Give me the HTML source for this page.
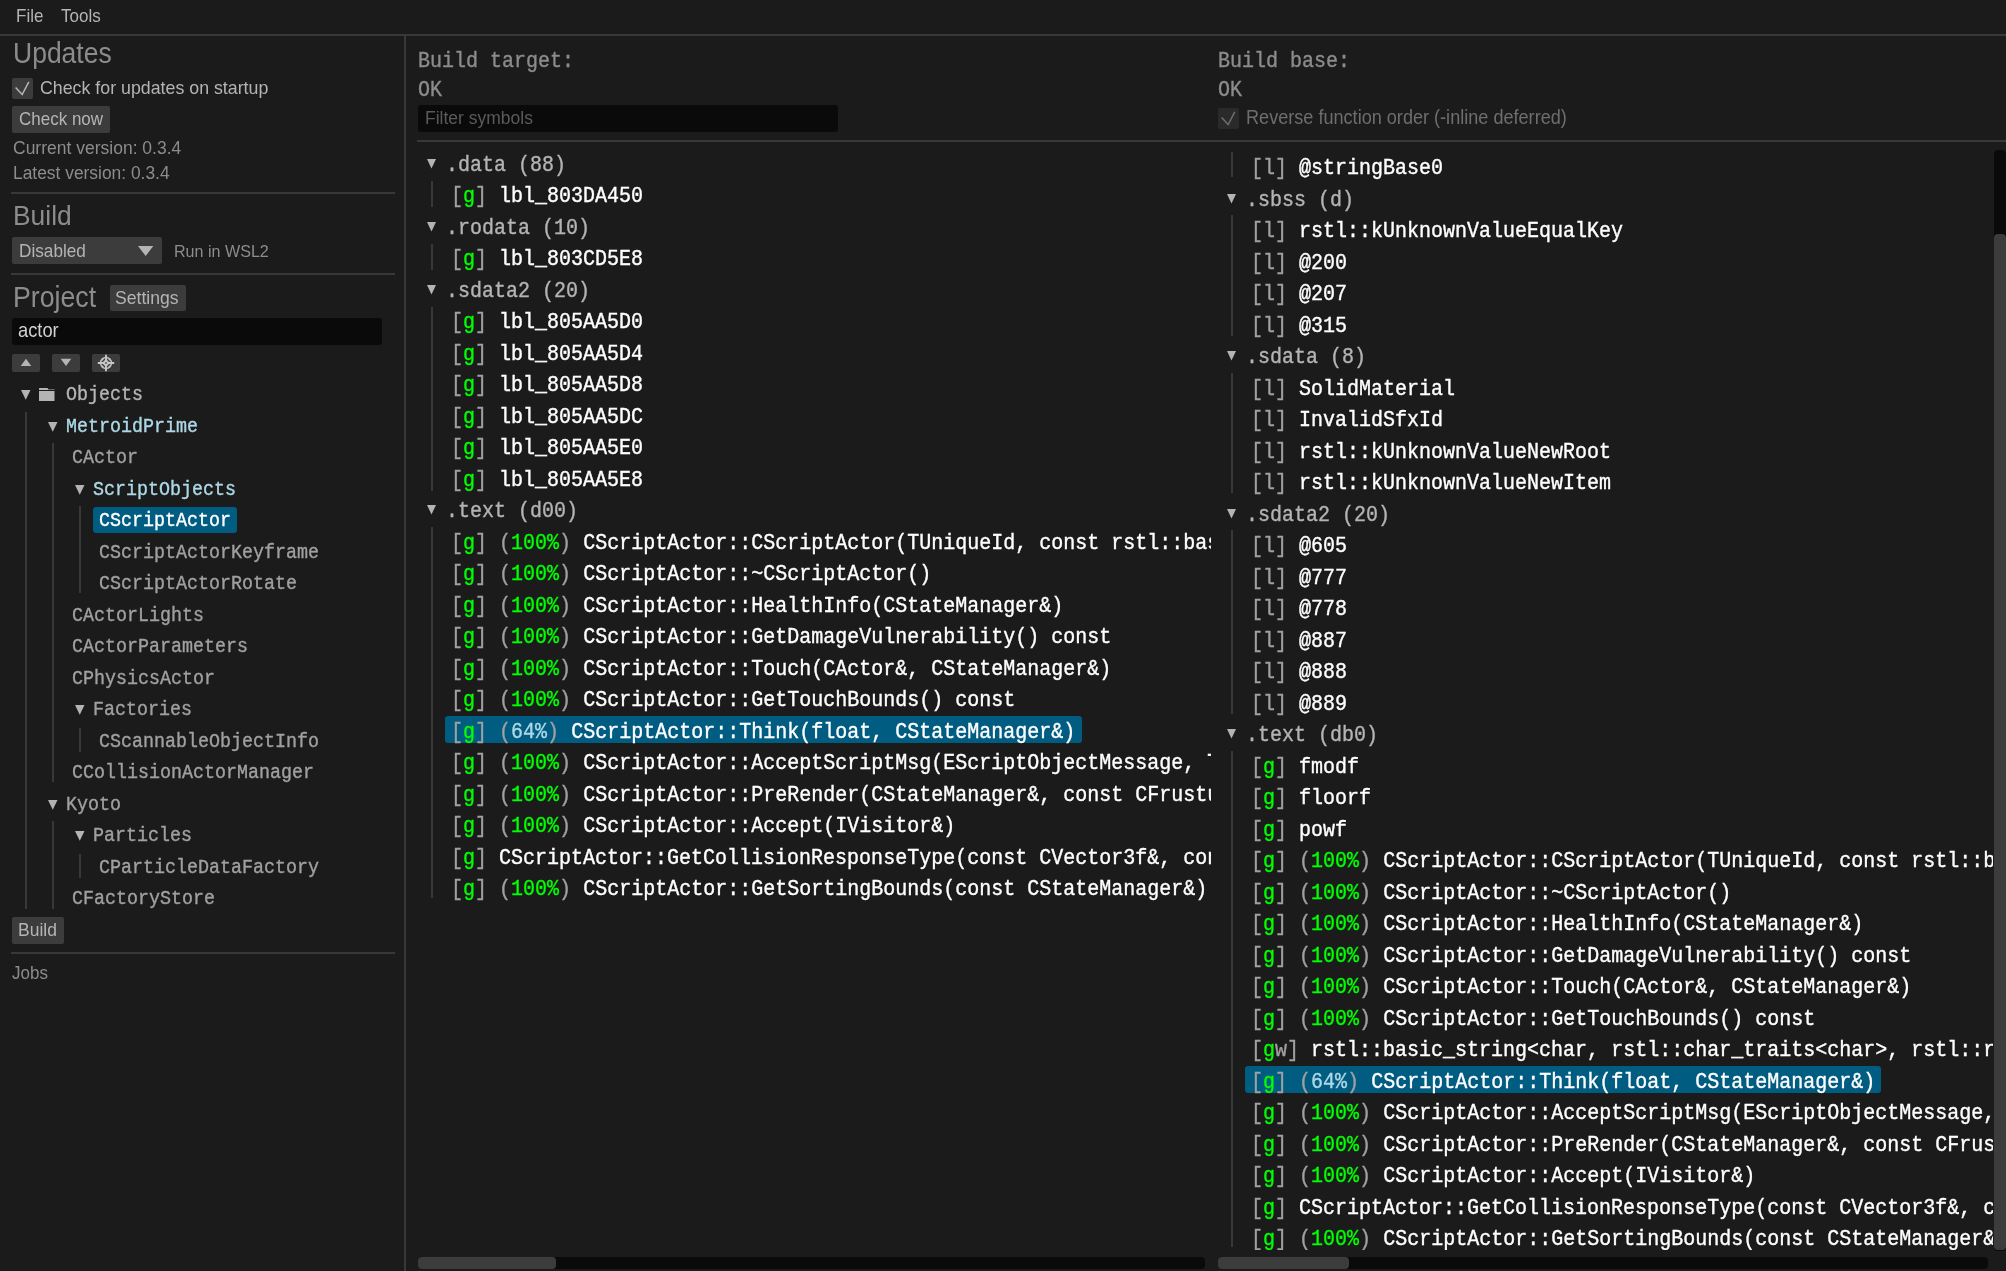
<!DOCTYPE html>
<html><head><meta charset="utf-8"><style>
html,body{margin:0;padding:0;background:#1b1b1b;width:2006px;height:1271px;overflow:hidden;position:relative}
.t{position:absolute;white-space:pre;margin:0;padding:0;will-change:transform}
.s{font-family:"Liberation Sans",sans-serif}
.m{font-family:"Liberation Mono",monospace;-webkit-text-stroke:0.35px currentColor}
.r{position:absolute;display:block}
.clip{position:absolute;overflow:hidden}
</style></head><body>
<div class="t s " style="left:15.5px;top:5.71px;font-size:17px;line-height:21px;color:#b4b4b4;transform:scaleY(1.08);transform-origin:0 16.39px;">File</div>
<div class="t s " style="left:61px;top:5.71px;font-size:17px;line-height:21px;color:#b4b4b4;transform:scaleY(1.08);transform-origin:0 16.39px;">Tools</div>
<div class="r" style="left:0px;top:34px;width:2006px;height:2px;background:#383838;border-radius:0px;"></div>
<div class="r" style="left:404px;top:36px;width:2px;height:1235px;background:#383838;border-radius:0px;"></div>
<div class="t s " style="left:12.5px;top:38.31px;font-size:26.5px;line-height:33px;color:#8c8c8c;transform:scaleY(1.08);transform-origin:0 25.69px;">Updates</div>
<div class="r" style="left:12px;top:77.5px;width:21px;height:21.0px;background:#3c3c3c;border-radius:2px;"></div>
<svg class="r" style="left:12px;top:77.5px" width="21" height="21"><polyline points="3.6,9.5 10.2,16.5 16.8,3.8" fill="none" stroke="#b4b4b4" stroke-width="1.5"/></svg>
<div class="t s " style="left:39.6px;top:76.83px;font-size:17.8px;line-height:22px;color:#b4b4b4;transform:scaleY(1.08);transform-origin:0 17.17px;">Check for updates on startup</div>
<div class="r" style="left:12px;top:106px;width:98px;height:26.599999999999994px;background:#3c3c3c;border-radius:2px;"></div>
<div class="t s " style="left:18.7px;top:108.91px;font-size:17.0px;line-height:21px;color:#b4b4b4;transform:scaleY(1.08);transform-origin:0 16.39px;">Check now</div>
<div class="t s " style="left:12.5px;top:136.93px;font-size:17.5px;line-height:22px;color:#8c8c8c;transform:scaleY(1.08);transform-origin:0 17.07px;">Current version: 0.3.4</div>
<div class="t s " style="left:12.5px;top:162.47px;font-size:17.4px;line-height:22px;color:#8c8c8c;transform:scaleY(1.08);transform-origin:0 17.03px;">Latest version: 0.3.4</div>
<div class="r" style="left:11px;top:192px;width:384px;height:2px;background:#383838;border-radius:0px;"></div>
<div class="t s " style="left:12.5px;top:200.15px;font-size:26.4px;line-height:33px;color:#8c8c8c;transform:scaleY(1.08);transform-origin:0 25.65px;">Build</div>
<div class="r" style="left:12px;top:237.4px;width:150px;height:26.900000000000006px;background:#3c3c3c;border-radius:2px;"></div>
<div class="t s " style="left:18.7px;top:239.54px;font-size:17.2px;line-height:22px;color:#b4b4b4;transform:scaleY(1.08);transform-origin:0 16.96px;">Disabled</div>
<svg class="r" style="left:136.65px;top:244.6px" width="17.3" height="11.9"><polygon points="1,1 16.3,1 8.65,10.9" fill="#b4b4b4"/></svg>
<div class="t s " style="left:174.4px;top:240.92px;font-size:16.1px;line-height:20px;color:#8c8c8c;transform:scaleY(1.08);transform-origin:0 15.58px;">Run in WSL2</div>
<div class="r" style="left:11px;top:273px;width:384px;height:2px;background:#383838;border-radius:0px;"></div>
<div class="t s " style="left:13px;top:281.74px;font-size:26.7px;line-height:33px;color:#8c8c8c;transform:scaleY(1.08);transform-origin:0 25.76px;">Project</div>
<div class="r" style="left:109.5px;top:284.8px;width:76.5px;height:26.19999999999999px;background:#3c3c3c;border-radius:2px;"></div>
<div class="t s " style="left:115.2px;top:286.90px;font-size:17.6px;line-height:22px;color:#b4b4b4;transform:scaleY(1.08);transform-origin:0 17.10px;">Settings</div>
<div class="r" style="left:12px;top:318px;width:370px;height:26.80000000000001px;background:#0a0a0a;border-radius:3px;"></div>
<div class="t s " style="left:18.3px;top:319.16px;font-size:18.3px;line-height:23px;color:#d2d2d2;transform:scaleY(1.08);transform-origin:0 17.84px;">actor</div>
<div class="r" style="left:12px;top:354px;width:28px;height:18px;background:#3c3c3c;border-radius:2px;"></div>
<div class="r" style="left:52px;top:354px;width:28px;height:18px;background:#3c3c3c;border-radius:2px;"></div>
<div class="r" style="left:92px;top:354px;width:28px;height:18px;background:#3c3c3c;border-radius:2px;"></div>
<svg class="r" style="left:20px;top:358px" width="12" height="9"><polygon points="0.7,8 11.3,8 6,0.8" fill="#b4b4b4"/></svg>
<svg class="r" style="left:60px;top:358px" width="12" height="9"><polygon points="0.7,0.8 11.3,0.8 6,8" fill="#b4b4b4"/></svg>
<svg class="r" style="left:96px;top:353px" width="20" height="20"><circle cx="10" cy="10" r="6.2" fill="#c0c0c0"/><path d="M10 5 L15 10 L10 15 L5 10 Z" fill="none" stroke="#3c3c3c" stroke-width="1.3"/><path d="M10 1.8V18.2M1.8 10H18.2" stroke="#c8c8c8" stroke-width="1.9"/><circle cx="10" cy="10" r="1" fill="#5a5a5a"/></svg>
<div class="r" style="left:93px;top:507.3px;width:143.8px;height:26.19999999999999px;background:#005c80;border-radius:3px;"></div>
<svg class="r" style="left:20.0px;top:389.0px" width="11.5" height="11.7"><polygon points="1,1 10.5,1 5.75,10.7" fill="#b4b4b4"/></svg>
<svg class="r" style="left:38px;top:387px" width="18" height="15"><path d="M1 1.5 Q1 1 1.5 1 H9.5 L10.5 2.5 H16.5 V14 H1.5 Q1 14 1 13.5 Z" fill="#b4b4b4"/><rect x="1" y="3" width="16" height="1" fill="#1b1b1b"/></svg>
<div class="t m " style="left:65.5px;top:384.42px;font-size:18.33px;line-height:23px;color:#b4b4b4;transform:scaleY(1.08);transform-origin:0 16.38px;">Objects</div>
<svg class="r" style="left:47.0px;top:420.5px" width="11.5" height="11.7"><polygon points="1,1 10.5,1 5.75,10.7" fill="#b4b4b4"/></svg>
<div class="t m " style="left:65.5px;top:415.92px;font-size:18.33px;line-height:23px;color:#add8e6;transform:scaleY(1.08);transform-origin:0 16.38px;">MetroidPrime</div>
<div class="t m " style="left:71.7px;top:447.42px;font-size:18.33px;line-height:23px;color:#a0a0a0;transform:scaleY(1.08);transform-origin:0 16.38px;">CActor</div>
<svg class="r" style="left:74.0px;top:483.5px" width="11.5" height="11.7"><polygon points="1,1 10.5,1 5.75,10.7" fill="#b4b4b4"/></svg>
<div class="t m " style="left:92.5px;top:478.92px;font-size:18.33px;line-height:23px;color:#add8e6;transform:scaleY(1.08);transform-origin:0 16.38px;">ScriptObjects</div>
<div class="t m " style="left:98.7px;top:510.42px;font-size:18.33px;line-height:23px;color:#ffffff;transform:scaleY(1.08);transform-origin:0 16.38px;">CScriptActor</div>
<div class="t m " style="left:98.7px;top:541.92px;font-size:18.33px;line-height:23px;color:#a0a0a0;transform:scaleY(1.08);transform-origin:0 16.38px;">CScriptActorKeyframe</div>
<div class="t m " style="left:98.7px;top:573.42px;font-size:18.33px;line-height:23px;color:#a0a0a0;transform:scaleY(1.08);transform-origin:0 16.38px;">CScriptActorRotate</div>
<div class="t m " style="left:71.7px;top:604.92px;font-size:18.33px;line-height:23px;color:#a0a0a0;transform:scaleY(1.08);transform-origin:0 16.38px;">CActorLights</div>
<div class="t m " style="left:71.7px;top:636.42px;font-size:18.33px;line-height:23px;color:#a0a0a0;transform:scaleY(1.08);transform-origin:0 16.38px;">CActorParameters</div>
<div class="t m " style="left:71.7px;top:667.92px;font-size:18.33px;line-height:23px;color:#a0a0a0;transform:scaleY(1.08);transform-origin:0 16.38px;">CPhysicsActor</div>
<svg class="r" style="left:74.0px;top:704.0px" width="11.5" height="11.7"><polygon points="1,1 10.5,1 5.75,10.7" fill="#b4b4b4"/></svg>
<div class="t m " style="left:92.5px;top:699.42px;font-size:18.33px;line-height:23px;color:#a0a0a0;transform:scaleY(1.08);transform-origin:0 16.38px;">Factories</div>
<div class="t m " style="left:98.7px;top:730.92px;font-size:18.33px;line-height:23px;color:#a0a0a0;transform:scaleY(1.08);transform-origin:0 16.38px;">CScannableObjectInfo</div>
<div class="t m " style="left:71.7px;top:762.42px;font-size:18.33px;line-height:23px;color:#a0a0a0;transform:scaleY(1.08);transform-origin:0 16.38px;">CCollisionActorManager</div>
<svg class="r" style="left:47.0px;top:798.5px" width="11.5" height="11.7"><polygon points="1,1 10.5,1 5.75,10.7" fill="#b4b4b4"/></svg>
<div class="t m " style="left:65.5px;top:793.92px;font-size:18.33px;line-height:23px;color:#a0a0a0;transform:scaleY(1.08);transform-origin:0 16.38px;">Kyoto</div>
<svg class="r" style="left:74.0px;top:830.0px" width="11.5" height="11.7"><polygon points="1,1 10.5,1 5.75,10.7" fill="#b4b4b4"/></svg>
<div class="t m " style="left:92.5px;top:825.42px;font-size:18.33px;line-height:23px;color:#a0a0a0;transform:scaleY(1.08);transform-origin:0 16.38px;">Particles</div>
<div class="t m " style="left:98.7px;top:856.92px;font-size:18.33px;line-height:23px;color:#a0a0a0;transform:scaleY(1.08);transform-origin:0 16.38px;">CParticleDataFactory</div>
<div class="t m " style="left:71.7px;top:888.42px;font-size:18.33px;line-height:23px;color:#a0a0a0;transform:scaleY(1.08);transform-origin:0 16.38px;">CFactoryStore</div>
<div class="r" style="left:25px;top:412px;width:2px;height:497px;background:#383838;border-radius:0px;"></div>
<div class="r" style="left:52px;top:443px;width:2px;height:339px;background:#383838;border-radius:0px;"></div>
<div class="r" style="left:52px;top:821px;width:2px;height:88px;background:#383838;border-radius:0px;"></div>
<div class="r" style="left:79px;top:506px;width:2px;height:87px;background:#383838;border-radius:0px;"></div>
<div class="r" style="left:79px;top:728px;width:2px;height:24px;background:#383838;border-radius:0px;"></div>
<div class="r" style="left:79px;top:854px;width:2px;height:24px;background:#383838;border-radius:0px;"></div>
<div class="r" style="left:12px;top:916.6px;width:52px;height:27.0px;background:#3c3c3c;border-radius:2px;"></div>
<div class="t s " style="left:18px;top:918.93px;font-size:17.5px;line-height:22px;color:#b4b4b4;transform:scaleY(1.08);transform-origin:0 17.07px;">Build</div>
<div class="r" style="left:11px;top:952px;width:384px;height:2px;background:#383838;border-radius:0px;"></div>
<div class="t s " style="left:12px;top:962.61px;font-size:17px;line-height:21px;color:#8c8c8c;transform:scaleY(1.08);transform-origin:0 16.39px;">Jobs</div>
<div class="t m " style="left:418px;top:48.58px;font-size:20px;line-height:25px;color:#8c8c8c;transform:scaleY(1.08);transform-origin:0 17.82px;">Build target:</div>
<div class="t m " style="left:418px;top:77.58px;font-size:20px;line-height:25px;color:#8c8c8c;transform:scaleY(1.08);transform-origin:0 17.82px;">OK</div>
<div class="r" style="left:418px;top:105.4px;width:420.20000000000005px;height:26.299999999999983px;background:#0a0a0a;border-radius:3px;"></div>
<div class="t s " style="left:424.5px;top:106.93px;font-size:17.5px;line-height:22px;color:#5a5a5a;transform:scaleY(1.08);transform-origin:0 17.07px;">Filter symbols</div>
<div class="t m " style="left:1218px;top:48.58px;font-size:20px;line-height:25px;color:#8c8c8c;transform:scaleY(1.08);transform-origin:0 17.82px;">Build base:</div>
<div class="t m " style="left:1218px;top:77.58px;font-size:20px;line-height:25px;color:#8c8c8c;transform:scaleY(1.08);transform-origin:0 17.82px;">OK</div>
<div class="r" style="left:1218px;top:107.7px;width:21px;height:21.10000000000001px;background:#2a2a2a;border-radius:2px;"></div>
<svg class="r" style="left:1218px;top:107.7px" width="21" height="21"><polyline points="3.6,9.5 10.2,16.5 16.8,3.8" fill="none" stroke="#6e6e6e" stroke-width="1.5"/></svg>
<div class="t s " style="left:1245.7px;top:107.22px;font-size:18.1px;line-height:23px;color:#6e6e6e;transform:scaleY(1.08);transform-origin:0 17.78px;">Reverse function order (-inline deferred)</div>
<div class="r" style="left:417px;top:140px;width:1589px;height:2px;background:#383838;border-radius:0px;"></div>
<div class="r" style="left:431px;top:181px;width:2px;height:26px;background:#383838;border-radius:0px;"></div>
<div class="r" style="left:431px;top:244px;width:2px;height:26px;background:#383838;border-radius:0px;"></div>
<div class="r" style="left:431px;top:307px;width:2px;height:184px;background:#383838;border-radius:0px;"></div>
<div class="r" style="left:431px;top:527px;width:2px;height:371px;background:#383838;border-radius:0px;"></div>
<div class="r" style="left:1231px;top:152px;width:2px;height:25px;background:#383838;border-radius:0px;"></div>
<div class="r" style="left:1231px;top:215px;width:2px;height:121px;background:#383838;border-radius:0px;"></div>
<div class="r" style="left:1231px;top:373px;width:2px;height:120px;background:#383838;border-radius:0px;"></div>
<div class="r" style="left:1231px;top:530px;width:2px;height:184px;background:#383838;border-radius:0px;"></div>
<div class="r" style="left:1231px;top:751px;width:2px;height:496px;background:#383838;border-radius:0px;"></div>
<div class="clip" style="left:411px;top:145px;width:799.5px;height:1105px">
<svg class="r" style="left:15.0px;top:12.800000000000011px" width="11" height="11.4"><polygon points="1,1 10,1 5.5,10.4" fill="#b4b4b4"/></svg>
<div class="t m " style="left:35px;top:7.68px;font-size:20px;line-height:25px;color:#b4b4b4;transform:scaleY(1.08);transform-origin:0 17.82px;">.data (88)</div>
<div class="t m " style="left:40px;top:39.18px;font-size:20px;line-height:25px;color:#ffffff;transform:scaleY(1.08);transform-origin:0 17.82px;white-space:pre"><span style="color:#a0a0a0">[</span><span style="color:#00ff00">g</span><span style="color:#a0a0a0">]</span> <span style="color:#ffffff">lbl_803DA450</span></div>
<svg class="r" style="left:15.0px;top:75.80000000000001px" width="11" height="11.4"><polygon points="1,1 10,1 5.5,10.4" fill="#b4b4b4"/></svg>
<div class="t m " style="left:35px;top:70.68px;font-size:20px;line-height:25px;color:#b4b4b4;transform:scaleY(1.08);transform-origin:0 17.82px;">.rodata (10)</div>
<div class="t m " style="left:40px;top:102.18px;font-size:20px;line-height:25px;color:#ffffff;transform:scaleY(1.08);transform-origin:0 17.82px;white-space:pre"><span style="color:#a0a0a0">[</span><span style="color:#00ff00">g</span><span style="color:#a0a0a0">]</span> <span style="color:#ffffff">lbl_803CD5E8</span></div>
<svg class="r" style="left:15.0px;top:138.8px" width="11" height="11.4"><polygon points="1,1 10,1 5.5,10.4" fill="#b4b4b4"/></svg>
<div class="t m " style="left:35px;top:133.68px;font-size:20px;line-height:25px;color:#b4b4b4;transform:scaleY(1.08);transform-origin:0 17.82px;">.sdata2 (20)</div>
<div class="t m " style="left:40px;top:165.18px;font-size:20px;line-height:25px;color:#ffffff;transform:scaleY(1.08);transform-origin:0 17.82px;white-space:pre"><span style="color:#a0a0a0">[</span><span style="color:#00ff00">g</span><span style="color:#a0a0a0">]</span> <span style="color:#ffffff">lbl_805AA5D0</span></div>
<div class="t m " style="left:40px;top:196.68px;font-size:20px;line-height:25px;color:#ffffff;transform:scaleY(1.08);transform-origin:0 17.82px;white-space:pre"><span style="color:#a0a0a0">[</span><span style="color:#00ff00">g</span><span style="color:#a0a0a0">]</span> <span style="color:#ffffff">lbl_805AA5D4</span></div>
<div class="t m " style="left:40px;top:228.18px;font-size:20px;line-height:25px;color:#ffffff;transform:scaleY(1.08);transform-origin:0 17.82px;white-space:pre"><span style="color:#a0a0a0">[</span><span style="color:#00ff00">g</span><span style="color:#a0a0a0">]</span> <span style="color:#ffffff">lbl_805AA5D8</span></div>
<div class="t m " style="left:40px;top:259.68px;font-size:20px;line-height:25px;color:#ffffff;transform:scaleY(1.08);transform-origin:0 17.82px;white-space:pre"><span style="color:#a0a0a0">[</span><span style="color:#00ff00">g</span><span style="color:#a0a0a0">]</span> <span style="color:#ffffff">lbl_805AA5DC</span></div>
<div class="t m " style="left:40px;top:291.18px;font-size:20px;line-height:25px;color:#ffffff;transform:scaleY(1.08);transform-origin:0 17.82px;white-space:pre"><span style="color:#a0a0a0">[</span><span style="color:#00ff00">g</span><span style="color:#a0a0a0">]</span> <span style="color:#ffffff">lbl_805AA5E0</span></div>
<div class="t m " style="left:40px;top:322.68px;font-size:20px;line-height:25px;color:#ffffff;transform:scaleY(1.08);transform-origin:0 17.82px;white-space:pre"><span style="color:#a0a0a0">[</span><span style="color:#00ff00">g</span><span style="color:#a0a0a0">]</span> <span style="color:#ffffff">lbl_805AA5E8</span></div>
<svg class="r" style="left:15.0px;top:359.3px" width="11" height="11.4"><polygon points="1,1 10,1 5.5,10.4" fill="#b4b4b4"/></svg>
<div class="t m " style="left:35px;top:354.18px;font-size:20px;line-height:25px;color:#b4b4b4;transform:scaleY(1.08);transform-origin:0 17.82px;">.text (d00)</div>
<div class="t m " style="left:40px;top:385.68px;font-size:20px;line-height:25px;color:#ffffff;transform:scaleY(1.08);transform-origin:0 17.82px;white-space:pre"><span style="color:#a0a0a0">[</span><span style="color:#00ff00">g</span><span style="color:#a0a0a0">]</span> <span style="color:#a0a0a0">(</span><span style="color:#00ff00">100%</span><span style="color:#a0a0a0">)</span> <span style="color:#ffffff">CScriptActor::CScriptActor(TUniqueId, const rstl::basic_string&lt;char&gt;&amp;)</span></div>
<div class="t m " style="left:40px;top:417.18px;font-size:20px;line-height:25px;color:#ffffff;transform:scaleY(1.08);transform-origin:0 17.82px;white-space:pre"><span style="color:#a0a0a0">[</span><span style="color:#00ff00">g</span><span style="color:#a0a0a0">]</span> <span style="color:#a0a0a0">(</span><span style="color:#00ff00">100%</span><span style="color:#a0a0a0">)</span> <span style="color:#ffffff">CScriptActor::~CScriptActor()</span></div>
<div class="t m " style="left:40px;top:448.68px;font-size:20px;line-height:25px;color:#ffffff;transform:scaleY(1.08);transform-origin:0 17.82px;white-space:pre"><span style="color:#a0a0a0">[</span><span style="color:#00ff00">g</span><span style="color:#a0a0a0">]</span> <span style="color:#a0a0a0">(</span><span style="color:#00ff00">100%</span><span style="color:#a0a0a0">)</span> <span style="color:#ffffff">CScriptActor::HealthInfo(CStateManager&amp;)</span></div>
<div class="t m " style="left:40px;top:480.18px;font-size:20px;line-height:25px;color:#ffffff;transform:scaleY(1.08);transform-origin:0 17.82px;white-space:pre"><span style="color:#a0a0a0">[</span><span style="color:#00ff00">g</span><span style="color:#a0a0a0">]</span> <span style="color:#a0a0a0">(</span><span style="color:#00ff00">100%</span><span style="color:#a0a0a0">)</span> <span style="color:#ffffff">CScriptActor::GetDamageVulnerability() const</span></div>
<div class="t m " style="left:40px;top:511.68px;font-size:20px;line-height:25px;color:#ffffff;transform:scaleY(1.08);transform-origin:0 17.82px;white-space:pre"><span style="color:#a0a0a0">[</span><span style="color:#00ff00">g</span><span style="color:#a0a0a0">]</span> <span style="color:#a0a0a0">(</span><span style="color:#00ff00">100%</span><span style="color:#a0a0a0">)</span> <span style="color:#ffffff">CScriptActor::Touch(CActor&amp;, CStateManager&amp;)</span></div>
<div class="t m " style="left:40px;top:543.18px;font-size:20px;line-height:25px;color:#ffffff;transform:scaleY(1.08);transform-origin:0 17.82px;white-space:pre"><span style="color:#a0a0a0">[</span><span style="color:#00ff00">g</span><span style="color:#a0a0a0">]</span> <span style="color:#a0a0a0">(</span><span style="color:#00ff00">100%</span><span style="color:#a0a0a0">)</span> <span style="color:#ffffff">CScriptActor::GetTouchBounds() const</span></div>
<div class="r" style="left:34px;top:571.2px;width:636.5px;height:27.199999999999932px;background:#005c80;border-radius:3px;"></div>
<div class="t m " style="left:40px;top:574.68px;font-size:20px;line-height:25px;color:#ffffff;transform:scaleY(1.08);transform-origin:0 17.82px;white-space:pre"><span style="color:#a0a0a0">[</span><span style="color:#00ff00">g</span><span style="color:#a0a0a0">]</span> <span style="color:#a0a0a0">(</span><span style="color:#add8e6">64%</span><span style="color:#a0a0a0">)</span> <span style="color:#ffffff">CScriptActor::Think(float, CStateManager&amp;)</span></div>
<div class="t m " style="left:40px;top:606.18px;font-size:20px;line-height:25px;color:#ffffff;transform:scaleY(1.08);transform-origin:0 17.82px;white-space:pre"><span style="color:#a0a0a0">[</span><span style="color:#00ff00">g</span><span style="color:#a0a0a0">]</span> <span style="color:#a0a0a0">(</span><span style="color:#00ff00">100%</span><span style="color:#a0a0a0">)</span> <span style="color:#ffffff">CScriptActor::AcceptScriptMsg(EScriptObjectMessage, TUniqueId, CStateManager&amp;)</span></div>
<div class="t m " style="left:40px;top:637.68px;font-size:20px;line-height:25px;color:#ffffff;transform:scaleY(1.08);transform-origin:0 17.82px;white-space:pre"><span style="color:#a0a0a0">[</span><span style="color:#00ff00">g</span><span style="color:#a0a0a0">]</span> <span style="color:#a0a0a0">(</span><span style="color:#00ff00">100%</span><span style="color:#a0a0a0">)</span> <span style="color:#ffffff">CScriptActor::PreRender(CStateManager&amp;, const CFrustum&amp;)</span></div>
<div class="t m " style="left:40px;top:669.18px;font-size:20px;line-height:25px;color:#ffffff;transform:scaleY(1.08);transform-origin:0 17.82px;white-space:pre"><span style="color:#a0a0a0">[</span><span style="color:#00ff00">g</span><span style="color:#a0a0a0">]</span> <span style="color:#a0a0a0">(</span><span style="color:#00ff00">100%</span><span style="color:#a0a0a0">)</span> <span style="color:#ffffff">CScriptActor::Accept(IVisitor&amp;)</span></div>
<div class="t m " style="left:40px;top:700.68px;font-size:20px;line-height:25px;color:#ffffff;transform:scaleY(1.08);transform-origin:0 17.82px;white-space:pre"><span style="color:#a0a0a0">[</span><span style="color:#00ff00">g</span><span style="color:#a0a0a0">]</span> <span style="color:#ffffff">CScriptActor::GetCollisionResponseType(const CVector3f&amp;, const CVector3f&amp;)</span></div>
<div class="t m " style="left:40px;top:732.18px;font-size:20px;line-height:25px;color:#ffffff;transform:scaleY(1.08);transform-origin:0 17.82px;white-space:pre"><span style="color:#a0a0a0">[</span><span style="color:#00ff00">g</span><span style="color:#a0a0a0">]</span> <span style="color:#a0a0a0">(</span><span style="color:#00ff00">100%</span><span style="color:#a0a0a0">)</span> <span style="color:#ffffff">CScriptActor::GetSortingBounds(const CStateManager&amp;)</span></div>
</div>
<div class="clip" style="left:1211px;top:145px;width:782px;height:1105px">
<div class="t m " style="left:40px;top:11.18px;font-size:20px;line-height:25px;color:#ffffff;transform:scaleY(1.08);transform-origin:0 17.82px;white-space:pre"><span style="color:#a0a0a0">[</span><span style="color:#a0a0a0">l</span><span style="color:#a0a0a0">]</span> <span style="color:#ffffff">@stringBase0</span></div>
<svg class="r" style="left:15.0px;top:47.80000000000001px" width="11" height="11.4"><polygon points="1,1 10,1 5.5,10.4" fill="#b4b4b4"/></svg>
<div class="t m " style="left:35px;top:42.68px;font-size:20px;line-height:25px;color:#b4b4b4;transform:scaleY(1.08);transform-origin:0 17.82px;">.sbss (d)</div>
<div class="t m " style="left:40px;top:74.18px;font-size:20px;line-height:25px;color:#ffffff;transform:scaleY(1.08);transform-origin:0 17.82px;white-space:pre"><span style="color:#a0a0a0">[</span><span style="color:#a0a0a0">l</span><span style="color:#a0a0a0">]</span> <span style="color:#ffffff">rstl::kUnknownValueEqualKey</span></div>
<div class="t m " style="left:40px;top:105.68px;font-size:20px;line-height:25px;color:#ffffff;transform:scaleY(1.08);transform-origin:0 17.82px;white-space:pre"><span style="color:#a0a0a0">[</span><span style="color:#a0a0a0">l</span><span style="color:#a0a0a0">]</span> <span style="color:#ffffff">@200</span></div>
<div class="t m " style="left:40px;top:137.18px;font-size:20px;line-height:25px;color:#ffffff;transform:scaleY(1.08);transform-origin:0 17.82px;white-space:pre"><span style="color:#a0a0a0">[</span><span style="color:#a0a0a0">l</span><span style="color:#a0a0a0">]</span> <span style="color:#ffffff">@207</span></div>
<div class="t m " style="left:40px;top:168.68px;font-size:20px;line-height:25px;color:#ffffff;transform:scaleY(1.08);transform-origin:0 17.82px;white-space:pre"><span style="color:#a0a0a0">[</span><span style="color:#a0a0a0">l</span><span style="color:#a0a0a0">]</span> <span style="color:#ffffff">@315</span></div>
<svg class="r" style="left:15.0px;top:205.3px" width="11" height="11.4"><polygon points="1,1 10,1 5.5,10.4" fill="#b4b4b4"/></svg>
<div class="t m " style="left:35px;top:200.18px;font-size:20px;line-height:25px;color:#b4b4b4;transform:scaleY(1.08);transform-origin:0 17.82px;">.sdata (8)</div>
<div class="t m " style="left:40px;top:231.68px;font-size:20px;line-height:25px;color:#ffffff;transform:scaleY(1.08);transform-origin:0 17.82px;white-space:pre"><span style="color:#a0a0a0">[</span><span style="color:#a0a0a0">l</span><span style="color:#a0a0a0">]</span> <span style="color:#ffffff">SolidMaterial</span></div>
<div class="t m " style="left:40px;top:263.18px;font-size:20px;line-height:25px;color:#ffffff;transform:scaleY(1.08);transform-origin:0 17.82px;white-space:pre"><span style="color:#a0a0a0">[</span><span style="color:#a0a0a0">l</span><span style="color:#a0a0a0">]</span> <span style="color:#ffffff">InvalidSfxId</span></div>
<div class="t m " style="left:40px;top:294.68px;font-size:20px;line-height:25px;color:#ffffff;transform:scaleY(1.08);transform-origin:0 17.82px;white-space:pre"><span style="color:#a0a0a0">[</span><span style="color:#a0a0a0">l</span><span style="color:#a0a0a0">]</span> <span style="color:#ffffff">rstl::kUnknownValueNewRoot</span></div>
<div class="t m " style="left:40px;top:326.18px;font-size:20px;line-height:25px;color:#ffffff;transform:scaleY(1.08);transform-origin:0 17.82px;white-space:pre"><span style="color:#a0a0a0">[</span><span style="color:#a0a0a0">l</span><span style="color:#a0a0a0">]</span> <span style="color:#ffffff">rstl::kUnknownValueNewItem</span></div>
<svg class="r" style="left:15.0px;top:362.8px" width="11" height="11.4"><polygon points="1,1 10,1 5.5,10.4" fill="#b4b4b4"/></svg>
<div class="t m " style="left:35px;top:357.68px;font-size:20px;line-height:25px;color:#b4b4b4;transform:scaleY(1.08);transform-origin:0 17.82px;">.sdata2 (20)</div>
<div class="t m " style="left:40px;top:389.18px;font-size:20px;line-height:25px;color:#ffffff;transform:scaleY(1.08);transform-origin:0 17.82px;white-space:pre"><span style="color:#a0a0a0">[</span><span style="color:#a0a0a0">l</span><span style="color:#a0a0a0">]</span> <span style="color:#ffffff">@605</span></div>
<div class="t m " style="left:40px;top:420.68px;font-size:20px;line-height:25px;color:#ffffff;transform:scaleY(1.08);transform-origin:0 17.82px;white-space:pre"><span style="color:#a0a0a0">[</span><span style="color:#a0a0a0">l</span><span style="color:#a0a0a0">]</span> <span style="color:#ffffff">@777</span></div>
<div class="t m " style="left:40px;top:452.18px;font-size:20px;line-height:25px;color:#ffffff;transform:scaleY(1.08);transform-origin:0 17.82px;white-space:pre"><span style="color:#a0a0a0">[</span><span style="color:#a0a0a0">l</span><span style="color:#a0a0a0">]</span> <span style="color:#ffffff">@778</span></div>
<div class="t m " style="left:40px;top:483.68px;font-size:20px;line-height:25px;color:#ffffff;transform:scaleY(1.08);transform-origin:0 17.82px;white-space:pre"><span style="color:#a0a0a0">[</span><span style="color:#a0a0a0">l</span><span style="color:#a0a0a0">]</span> <span style="color:#ffffff">@887</span></div>
<div class="t m " style="left:40px;top:515.18px;font-size:20px;line-height:25px;color:#ffffff;transform:scaleY(1.08);transform-origin:0 17.82px;white-space:pre"><span style="color:#a0a0a0">[</span><span style="color:#a0a0a0">l</span><span style="color:#a0a0a0">]</span> <span style="color:#ffffff">@888</span></div>
<div class="t m " style="left:40px;top:546.68px;font-size:20px;line-height:25px;color:#ffffff;transform:scaleY(1.08);transform-origin:0 17.82px;white-space:pre"><span style="color:#a0a0a0">[</span><span style="color:#a0a0a0">l</span><span style="color:#a0a0a0">]</span> <span style="color:#ffffff">@889</span></div>
<svg class="r" style="left:15.0px;top:583.3px" width="11" height="11.4"><polygon points="1,1 10,1 5.5,10.4" fill="#b4b4b4"/></svg>
<div class="t m " style="left:35px;top:578.18px;font-size:20px;line-height:25px;color:#b4b4b4;transform:scaleY(1.08);transform-origin:0 17.82px;">.text (db0)</div>
<div class="t m " style="left:40px;top:609.68px;font-size:20px;line-height:25px;color:#ffffff;transform:scaleY(1.08);transform-origin:0 17.82px;white-space:pre"><span style="color:#a0a0a0">[</span><span style="color:#00ff00">g</span><span style="color:#a0a0a0">]</span> <span style="color:#ffffff">fmodf</span></div>
<div class="t m " style="left:40px;top:641.18px;font-size:20px;line-height:25px;color:#ffffff;transform:scaleY(1.08);transform-origin:0 17.82px;white-space:pre"><span style="color:#a0a0a0">[</span><span style="color:#00ff00">g</span><span style="color:#a0a0a0">]</span> <span style="color:#ffffff">floorf</span></div>
<div class="t m " style="left:40px;top:672.68px;font-size:20px;line-height:25px;color:#ffffff;transform:scaleY(1.08);transform-origin:0 17.82px;white-space:pre"><span style="color:#a0a0a0">[</span><span style="color:#00ff00">g</span><span style="color:#a0a0a0">]</span> <span style="color:#ffffff">powf</span></div>
<div class="t m " style="left:40px;top:704.18px;font-size:20px;line-height:25px;color:#ffffff;transform:scaleY(1.08);transform-origin:0 17.82px;white-space:pre"><span style="color:#a0a0a0">[</span><span style="color:#00ff00">g</span><span style="color:#a0a0a0">]</span> <span style="color:#a0a0a0">(</span><span style="color:#00ff00">100%</span><span style="color:#a0a0a0">)</span> <span style="color:#ffffff">CScriptActor::CScriptActor(TUniqueId, const rstl::basic_string&lt;char&gt;&amp;)</span></div>
<div class="t m " style="left:40px;top:735.68px;font-size:20px;line-height:25px;color:#ffffff;transform:scaleY(1.08);transform-origin:0 17.82px;white-space:pre"><span style="color:#a0a0a0">[</span><span style="color:#00ff00">g</span><span style="color:#a0a0a0">]</span> <span style="color:#a0a0a0">(</span><span style="color:#00ff00">100%</span><span style="color:#a0a0a0">)</span> <span style="color:#ffffff">CScriptActor::~CScriptActor()</span></div>
<div class="t m " style="left:40px;top:767.18px;font-size:20px;line-height:25px;color:#ffffff;transform:scaleY(1.08);transform-origin:0 17.82px;white-space:pre"><span style="color:#a0a0a0">[</span><span style="color:#00ff00">g</span><span style="color:#a0a0a0">]</span> <span style="color:#a0a0a0">(</span><span style="color:#00ff00">100%</span><span style="color:#a0a0a0">)</span> <span style="color:#ffffff">CScriptActor::HealthInfo(CStateManager&amp;)</span></div>
<div class="t m " style="left:40px;top:798.68px;font-size:20px;line-height:25px;color:#ffffff;transform:scaleY(1.08);transform-origin:0 17.82px;white-space:pre"><span style="color:#a0a0a0">[</span><span style="color:#00ff00">g</span><span style="color:#a0a0a0">]</span> <span style="color:#a0a0a0">(</span><span style="color:#00ff00">100%</span><span style="color:#a0a0a0">)</span> <span style="color:#ffffff">CScriptActor::GetDamageVulnerability() const</span></div>
<div class="t m " style="left:40px;top:830.18px;font-size:20px;line-height:25px;color:#ffffff;transform:scaleY(1.08);transform-origin:0 17.82px;white-space:pre"><span style="color:#a0a0a0">[</span><span style="color:#00ff00">g</span><span style="color:#a0a0a0">]</span> <span style="color:#a0a0a0">(</span><span style="color:#00ff00">100%</span><span style="color:#a0a0a0">)</span> <span style="color:#ffffff">CScriptActor::Touch(CActor&amp;, CStateManager&amp;)</span></div>
<div class="t m " style="left:40px;top:861.68px;font-size:20px;line-height:25px;color:#ffffff;transform:scaleY(1.08);transform-origin:0 17.82px;white-space:pre"><span style="color:#a0a0a0">[</span><span style="color:#00ff00">g</span><span style="color:#a0a0a0">]</span> <span style="color:#a0a0a0">(</span><span style="color:#00ff00">100%</span><span style="color:#a0a0a0">)</span> <span style="color:#ffffff">CScriptActor::GetTouchBounds() const</span></div>
<div class="t m " style="left:40px;top:893.18px;font-size:20px;line-height:25px;color:#ffffff;transform:scaleY(1.08);transform-origin:0 17.82px;white-space:pre"><span style="color:#a0a0a0">[</span><span style="color:#00ff00">g</span><span style="color:#a0a0a0">w</span><span style="color:#a0a0a0">]</span> <span style="color:#ffffff">rstl::basic_string&lt;char, rstl::char_traits&lt;char&gt;, rstl::rmemory_allocator&gt;::~basic_string()</span></div>
<div class="r" style="left:34px;top:921.2px;width:636px;height:27.200000000000045px;background:#005c80;border-radius:3px;"></div>
<div class="t m " style="left:40px;top:924.68px;font-size:20px;line-height:25px;color:#ffffff;transform:scaleY(1.08);transform-origin:0 17.82px;white-space:pre"><span style="color:#a0a0a0">[</span><span style="color:#00ff00">g</span><span style="color:#a0a0a0">]</span> <span style="color:#a0a0a0">(</span><span style="color:#add8e6">64%</span><span style="color:#a0a0a0">)</span> <span style="color:#ffffff">CScriptActor::Think(float, CStateManager&amp;)</span></div>
<div class="t m " style="left:40px;top:956.18px;font-size:20px;line-height:25px;color:#ffffff;transform:scaleY(1.08);transform-origin:0 17.82px;white-space:pre"><span style="color:#a0a0a0">[</span><span style="color:#00ff00">g</span><span style="color:#a0a0a0">]</span> <span style="color:#a0a0a0">(</span><span style="color:#00ff00">100%</span><span style="color:#a0a0a0">)</span> <span style="color:#ffffff">CScriptActor::AcceptScriptMsg(EScriptObjectMessage, TUniqueId, CStateManager&amp;)</span></div>
<div class="t m " style="left:40px;top:987.68px;font-size:20px;line-height:25px;color:#ffffff;transform:scaleY(1.08);transform-origin:0 17.82px;white-space:pre"><span style="color:#a0a0a0">[</span><span style="color:#00ff00">g</span><span style="color:#a0a0a0">]</span> <span style="color:#a0a0a0">(</span><span style="color:#00ff00">100%</span><span style="color:#a0a0a0">)</span> <span style="color:#ffffff">CScriptActor::PreRender(CStateManager&amp;, const CFrustum&amp;)</span></div>
<div class="t m " style="left:40px;top:1019.18px;font-size:20px;line-height:25px;color:#ffffff;transform:scaleY(1.08);transform-origin:0 17.82px;white-space:pre"><span style="color:#a0a0a0">[</span><span style="color:#00ff00">g</span><span style="color:#a0a0a0">]</span> <span style="color:#a0a0a0">(</span><span style="color:#00ff00">100%</span><span style="color:#a0a0a0">)</span> <span style="color:#ffffff">CScriptActor::Accept(IVisitor&amp;)</span></div>
<div class="t m " style="left:40px;top:1050.68px;font-size:20px;line-height:25px;color:#ffffff;transform:scaleY(1.08);transform-origin:0 17.82px;white-space:pre"><span style="color:#a0a0a0">[</span><span style="color:#00ff00">g</span><span style="color:#a0a0a0">]</span> <span style="color:#ffffff">CScriptActor::GetCollisionResponseType(const CVector3f&amp;, const CVector3f&amp;)</span></div>
<div class="t m " style="left:40px;top:1082.18px;font-size:20px;line-height:25px;color:#ffffff;transform:scaleY(1.08);transform-origin:0 17.82px;white-space:pre"><span style="color:#a0a0a0">[</span><span style="color:#00ff00">g</span><span style="color:#a0a0a0">]</span> <span style="color:#a0a0a0">(</span><span style="color:#00ff00">100%</span><span style="color:#a0a0a0">)</span> <span style="color:#ffffff">CScriptActor::GetSortingBounds(const CStateManager&amp;)</span></div>
</div>
<div class="r" style="left:418px;top:1257px;width:787.3px;height:11.599999999999909px;background:#0a0a0a;border-radius:4px;"></div>
<div class="r" style="left:418px;top:1257px;width:137.70000000000005px;height:11.599999999999909px;background:#3c3c3c;border-radius:4px;"></div>
<div class="r" style="left:1218px;top:1257px;width:769.5px;height:11.599999999999909px;background:#0a0a0a;border-radius:4px;"></div>
<div class="r" style="left:1218px;top:1257px;width:130.5999999999999px;height:11.599999999999909px;background:#3c3c3c;border-radius:4px;"></div>
<div class="r" style="left:1994.2px;top:150px;width:11.399999999999864px;height:1100.5px;background:#0a0a0a;border-radius:4px;"></div>
<div class="r" style="left:1994.2px;top:234.3px;width:11.399999999999864px;height:1016.2px;background:#3c3c3c;border-radius:4px;"></div>
</body></html>
